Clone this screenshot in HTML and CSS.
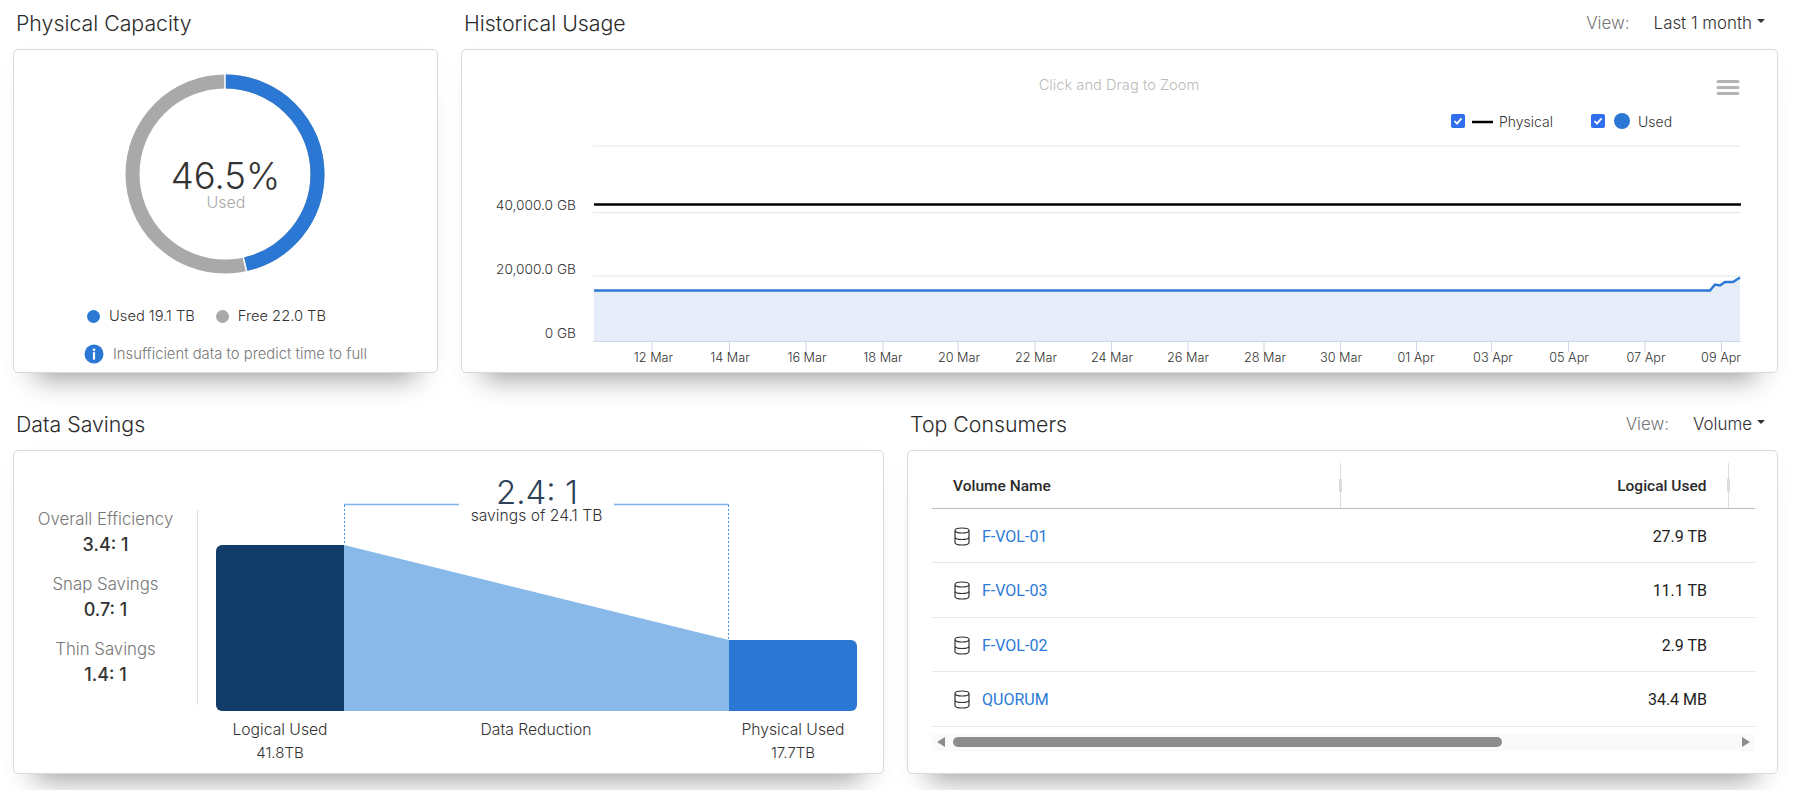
FILE: index.html
```html
<!DOCTYPE html>
<html lang="en">
<head>
    <meta charset="UTF-8">
    <meta name="viewport" content="width=device-width, initial-scale=1.0">
    <title>Dashboard</title>
    <link rel="stylesheet" href="styles.css">
</head>
<body>
    <main class="dashboard">
        <div class="row row-top">
            <section class="panel">
                <div class="panel-head"><h2>Physical Capacity</h2></div>
                <div class="card capacity">
                    <svg class="donut" width="200" height="200" viewBox="0 0 200 200">
                        <circle class="donut-free" cx="100" cy="100" r="92.5"></circle>
                        <circle class="donut-used" cx="100" cy="100" r="92.5" pathLength="100" stroke-dasharray="46.5 53.5" transform="rotate(-90 100 100)"></circle>
                        <line class="donut-gap" x1="100" y1="0" x2="100" y2="16"></line>
                        <line class="donut-gap" x1="118.2" y1="183" x2="121.9" y2="198.5"></line>
                        <text class="donut-value" x="100.500" y="114.500">46.5%</text>
                        <text class="donut-label" x="101" y="134">Used</text>
                    </svg>
                    <div class="legend">
                        <span class="legend-item"><i class="dot dot-used"></i>Used 19.1 TB</span>
                        <span class="legend-item"><i class="dot dot-free"></i>Free 22.0 TB</span>
                    </div>
                    <div class="note">
                        <svg width="20" height="20" viewBox="0 0 20 20">
                            <circle cx="10" cy="10" r="9.5" fill="#2b78d4"></circle>
                            <circle cx="10" cy="5.8" r="1.4" fill="#fff"></circle>
                            <rect x="8.9" y="8.2" width="2.2" height="7.4" fill="#fff"></rect>
                        </svg>
                        <span>Insufficient data to predict time to full</span>
                    </div>
                </div>
            </section>

            <section class="panel">
                <div class="panel-head">
                    <h2>Historical Usage</h2>
                    <div class="view-select"><span class="view-label">View:</span><span class="view-value">Last 1 month</span><i class="caret"></i></div>
                </div>
                <div class="card">
                    <!-- viewBox is in page pixels -->
                    <svg class="chart" viewBox="462 50 1315 322">
                        <text class="chart-hint" x="1119" y="90">Click and Drag to Zoom</text>
                        <path class="chart-menu" d="M1718 81.5h20M1718 87.5h20M1718 93.5h20"></path>

                        <rect class="check" x="1451" y="114" width="14" height="14" rx="2"></rect>
                        <path class="check-mark" d="M1454.5 121l2.5 2.7 4.5-5.4"></path>
                        <path class="legend-line" d="M1472 122h21"></path>
                        <text class="chart-legend" x="1499" y="127">Physical</text>
                        <rect class="check" x="1591" y="114" width="14" height="14" rx="2"></rect>
                        <path class="check-mark" d="M1594.5 121l2.5 2.7 4.5-5.4"></path>
                        <circle cx="1622" cy="121" r="8" fill="#2b78d4"></circle>
                        <text class="chart-legend" x="1638" y="127">Used</text>

                        <path class="chart-grid" d="M593 146h1148M593 212.500h1148M593 276h1148"></path>
                        <path class="chart-area" d="M594 290H1710L1715 284.500 1720 285.500 1725 282H1733L1740 277.500V341H594Z"></path>
                        <path class="chart-used" d="M594 290.500H1710L1715 284.500 1720 285.500 1725 282H1733L1740 277.500"></path>
                        <path class="chart-physical" d="M594 204.500H1741"></path>
                        <path class="chart-axis" d="M593 341.500h1148M652 342v10M729.500 342v10M806 342v10M883 342v10M958 342v10M1035 342v10M1111.500 342v10M1188 342v10M1264 342v10M1340.500 342v10M1416.500 342v10M1491.500 342v10M1568.500 342v10M1645 342v10M1721.500 342v10"></path>

                        <text class="chart-y" x="576" y="209.500">40,000.0 GB</text>
                        <text class="chart-y" x="576" y="273.500">20,000.0 GB</text>
                        <text class="chart-y" x="576" y="338">0 GB</text>

                        <g class="chart-x">
                            <text x="653.500" y="362">12 Mar</text>
                            <text x="730" y="362">14 Mar</text>
                            <text x="807" y="362">16 Mar</text>
                            <text x="883" y="362">18 Mar</text>
                            <text x="959" y="362">20 Mar</text>
                            <text x="1036" y="362">22 Mar</text>
                            <text x="1112" y="362">24 Mar</text>
                            <text x="1188" y="362">26 Mar</text>
                            <text x="1265" y="362">28 Mar</text>
                            <text x="1341" y="362">30 Mar</text>
                            <text x="1416" y="362">01 Apr</text>
                            <text x="1493" y="362">03 Apr</text>
                            <text x="1569" y="362">05 Apr</text>
                            <text x="1646" y="362">07 Apr</text>
                            <text x="1721" y="362">09 Apr</text>
                        </g>
                    </svg>
                </div>
            </section>
        </div>

        <div class="row row-bottom">
            <section class="panel">
                <div class="panel-head"><h2>Data Savings</h2></div>
                <div class="card savings">
                    <div class="stats">
                        <div class="stat"><span>Overall Efficiency</span><strong>3.4: 1</strong></div>
                        <div class="stat"><span>Snap Savings</span><strong>0.7: 1</strong></div>
                        <div class="stat"><span>Thin Savings</span><strong>1.4: 1</strong></div>
                    </div>
                    <div class="stats-divider"></div>
                    <svg class="savings-chart" viewBox="198 451 685 322">
                        <path class="bracket" d="M344 504.500H459M614 504.500H729"></path>
                        <path class="bracket-drop" d="M344.500 505V545M728.500 505V640"></path>
                        <path fill="#123c6a" d="M222 545H344V711H222a6 6 0 0 1-6-6V551a6 6 0 0 1 6-6Z"></path>
                        <path fill="#88b9e8" d="M344 545L729 640V711H344Z"></path>
                        <path fill="#2b78d4" d="M729 640H851a6 6 0 0 1 6 6V705a6 6 0 0 1-6 6H729Z"></path>
                        <text class="ratio" x="537" y="504">2.4: 1</text>
                        <text class="bar-label" x="536.500" y="520.500">savings of 24.1 TB</text>
                        <text class="bar-label" x="280" y="734.500">Logical Used</text>
                        <text class="bar-value" x="280" y="758">41.8TB</text>
                        <text class="bar-label" x="536" y="734.500">Data Reduction</text>
                        <text class="bar-label" x="793" y="734.500">Physical Used</text>
                        <text class="bar-value" x="793" y="758">17.7TB</text>
                    </svg>
                </div>
            </section>

            <section class="panel">
                <div class="panel-head">
                    <h2>Top Consumers</h2>
                    <div class="view-select"><span class="view-label">View:</span><span class="view-value">Volume</span><i class="caret"></i></div>
                </div>
                <div class="card consumers">
                    <table>
                        <colgroup><col class="col-name"><col class="col-used"><col></colgroup>
                        <thead>
                            <tr><th>Volume Name</th><th class="num">Logical Used</th><th></th></tr>
                        </thead>
                        <tbody>
                            <tr><td><svg class="vol-icon" width="16" height="19" viewBox="0 0 16 19"><path d="M1 3.500C1 2 4 1 8 1s7 1 7 2.500S12 6 8 6 1 5 1 3.500ZM1 3.500V15.500C1 17 4 18 8 18s7-1 7-2.500V3.500M1 10c0 1.500 3 2.500 7 2.500s7-1 7-2.500"></path></svg><a href="#">F-VOL-01</a></td><td class="num">27.9 TB</td><td></td></tr>
                            <tr><td><svg class="vol-icon" width="16" height="19" viewBox="0 0 16 19"><path d="M1 3.500C1 2 4 1 8 1s7 1 7 2.500S12 6 8 6 1 5 1 3.500ZM1 3.500V15.500C1 17 4 18 8 18s7-1 7-2.500V3.500M1 10c0 1.500 3 2.500 7 2.500s7-1 7-2.500"></path></svg><a href="#">F-VOL-03</a></td><td class="num">11.1 TB</td><td></td></tr>
                            <tr><td><svg class="vol-icon" width="16" height="19" viewBox="0 0 16 19"><path d="M1 3.500C1 2 4 1 8 1s7 1 7 2.500S12 6 8 6 1 5 1 3.500ZM1 3.500V15.500C1 17 4 18 8 18s7-1 7-2.500V3.500M1 10c0 1.500 3 2.500 7 2.500s7-1 7-2.500"></path></svg><a href="#">F-VOL-02</a></td><td class="num">2.9 TB</td><td></td></tr>
                            <tr><td><svg class="vol-icon" width="16" height="19" viewBox="0 0 16 19"><path d="M1 3.500C1 2 4 1 8 1s7 1 7 2.500S12 6 8 6 1 5 1 3.500ZM1 3.500V15.500C1 17 4 18 8 18s7-1 7-2.500V3.500M1 10c0 1.500 3 2.500 7 2.500s7-1 7-2.500"></path></svg><a href="#">QUORUM</a></td><td class="num">34.4 MB</td><td></td></tr>
                        </tbody>
                    </table>
                    <div class="scrollbar">
                        <i class="arrow arrow-left"></i>
                        <div class="scroll-track"><div class="scroll-thumb"></div></div>
                        <i class="arrow arrow-right"></i>
                    </div>
                </div>
            </section>
        </div>
    </main>
</body>
</html>
```

FILE: styles.css
```css
* {
    box-sizing: border-box;
}
html, body {
    margin: 0;
    height: 100%;
    overflow: hidden;
    background: #fff;
}
body {
    font-family: Inter, "Noto Sans", sans-serif;
    color: #333;
}
.dashboard {
    padding: 0 18px 0 13px;
}
.row {
    display: grid;
    column-gap: 23px;
}
.row-top {
    grid-template-columns: 425px 1fr;
}
.row-bottom {
    grid-template-columns: 1fr 1fr;
    margin-top: 28px;
}
.panel-head {
    height: 49px;
    padding: 0 3px 4px;
    display: flex;
    align-items: center;
    justify-content: space-between;
}
h2 {
    margin: 0;
    font-size: 21.300px;
    font-weight: 300;
    color: #2b2b2b;
}
.view-select {
    display: flex;
    align-items: center;
    font-size: 16.900px;
    font-weight: 300;
    padding-right: 10px;
}
.view-label {
    color: #777;
    margin-right: 24px;
}
.view-value {
    color: #333;
}
.caret {
    width: 0;
    height: 0;
    margin: 0 0 3px 5px;
    border-left: 4px solid transparent;
    border-right: 4px solid transparent;
    border-top: 4px solid #333;
}
.card {
    height: 324px;
    background: #fff;
    border: 1px solid #d9d9d9;
    border-radius: 5px;
    box-shadow: 0 28px 26px -22px rgba(0, 0, 0, 0.36), 0 6px 30px rgba(0, 0, 0, 0.02);
}

/* capacity */
.capacity {
    display: flex;
    flex-direction: column;
    align-items: center;
    padding-top: 24px;
}
.donut {
    display: block;
    margin-left: -2px;
}
.donut-free, .donut-used {
    fill: none;
    stroke-width: 14;
}
.donut-free {
    stroke: #a9a9a9;
}
.donut-used {
    stroke: #2b78d4;
}
.donut-gap {
    stroke: #fff;
    stroke-width: 1.5;
}
.donut-value {
    font-size: 36.500px;
    font-weight: 300;
    text-anchor: middle;
    fill: #333;
}
.donut-label {
    font-size: 16px;
    font-weight: 300;
    text-anchor: middle;
    fill: #aaa;
}
.legend {
    display: flex;
    gap: 21px;
    align-self: flex-start;
    margin: 32px 0 0 73px;
    font-size: 14.700px;
    font-weight: 300;
    color: #333;
    line-height: 20px;
}
.legend-item {
    display: flex;
    align-items: center;
}
.dot {
    width: 13px;
    height: 13px;
    border-radius: 50%;
    margin-right: 9px;
}
.dot-used {
    background: #2b78d4;
}
.dot-free {
    background: #a9a9a9;
}
.note {
    display: flex;
    align-items: center;
    gap: 9px;
    margin-top: 18px;
    font-size: 14.800px;
    font-weight: 300;
    color: #777;
}

/* historical chart */
.chart {
    display: block;
    width: 100%;
    height: 100%;
}
.chart-hint {
    font-size: 14.700px;
    font-weight: 300;
    fill: #bbb;
    text-anchor: middle;
}
.chart-menu {
    fill: none;
    stroke: #b3b3b3;
    stroke-width: 3;
    stroke-linecap: round;
}
.check {
    fill: #2f6fed;
}
.check-mark {
    fill: none;
    stroke: #fff;
    stroke-width: 1.8;
}
.legend-line {
    stroke: #000;
    stroke-width: 2.5;
}
.chart-legend {
    font-size: 14px;
    font-weight: 300;
    fill: #333;
}
.chart-grid {
    fill: none;
    stroke: #e6e6e6;
    stroke-width: 1;
}
.chart-area {
    fill: #e6ecf8;
}
.chart-used {
    fill: none;
    stroke: #2b78d4;
    stroke-width: 2.500;
}
.chart-physical {
    stroke: #000;
    stroke-width: 2.5;
}
.chart-axis {
    fill: none;
    stroke: #ccd6eb;
    stroke-width: 1;
}
.chart-y {
    font-size: 13.700px;
    font-weight: 300;
    fill: #333;
    text-anchor: end;
}
.chart-x text {
    font-size: 12.700px;
    font-weight: 300;
    fill: #333;
    text-anchor: middle;
}

/* data savings */
.savings {
    display: flex;
    align-items: flex-start;
}
.stats {
    width: 183px;
    margin-top: 55px;
    display: flex;
    flex-direction: column;
    gap: 13px;
}
.stat {
    display: flex;
    flex-direction: column;
    align-items: center;
    line-height: 26px;
}
.stat span {
    font-size: 16.800px;
    font-weight: 300;
    color: #777;
}
.stat strong {
    font-size: 18px;
    font-weight: 500;
    color: #333;
}
.stats-divider {
    width: 1px;
    height: 195px;
    margin-top: 59px;
    background: #ddd;
}
.savings-chart {
    display: block;
    width: 685px;
    height: 322px;
}
.bracket {
    fill: none;
    stroke: #7db3ea;
    stroke-width: 1.500;
}
.bracket-drop {
    fill: none;
    stroke: #4a90e2;
    stroke-width: 1;
    stroke-dasharray: 2 2;
}
.ratio {
    font-size: 33px;
    font-weight: 300;
    fill: #2d4159;
    text-anchor: middle;
}
.bar-label {
    font-size: 15.700px;
    font-weight: 300;
    fill: #333;
    text-anchor: middle;
}
.bar-value {
    font-size: 15px;
    font-weight: 300;
    fill: #333;
    text-anchor: middle;
}

/* top consumers */
.consumers {
    padding: 12px 22px 0 24px;
}
table {
    width: 100%;
    border-collapse: collapse;
    table-layout: fixed;
    font-family: Roboto, sans-serif;
}
.col-name {
    width: 408px;
}
.col-used {
    width: 388px;
}
th {
    position: relative;
    height: 45px;
    padding: 1px 21px 0;
    font-size: 15.500px;
    font-weight: 500;
    text-align: left;
    color: #2b2b2b;
    border-bottom: 1px solid #b9bcc4;
    border-right: 1px solid #ddd;
}
/* column resize handle */
th::after {
    content: "";
    position: absolute;
    right: -2px;
    top: 16px;
    width: 3px;
    height: 13px;
    background: #dcdcdc;
}
th:last-child {
    border-right: none;
}
th:last-child::after {
    display: none;
}
td {
    height: 54.500px;
    padding: 2px 21px 0;
    font-size: 16px;
    color: #222;
    border-bottom: 1px solid #e4e7ee;
}
th.num, td.num {
    text-align: right;
}
td a {
    color: #2b7ad9;
    text-decoration: none;
}
.vol-icon {
    display: inline-block;
    vertical-align: middle;
    margin: -3px 12px 0 1px;
    fill: none;
    stroke: #333;
    stroke-width: 1.200;
}
.scrollbar {
    display: flex;
    align-items: center;
    height: 17px;
    margin-top: 7px;
    background: #fafafa;
}
.scroll-track {
    flex: 1;
    margin: 0 6px;
}
.scroll-thumb {
    width: 549px;
    height: 10px;
    margin-left: 2px;
    border-radius: 5px;
    background: #8c8c8c;
}
.arrow {
    width: 0;
    height: 0;
    border-top: 5px solid transparent;
    border-bottom: 5px solid transparent;
}
.arrow-left {
    margin-left: 5px;
    border-right: 8px solid #8c8c8c;
}
.arrow-right {
    margin-right: 5px;
    border-left: 8px solid #8c8c8c;
}
```
